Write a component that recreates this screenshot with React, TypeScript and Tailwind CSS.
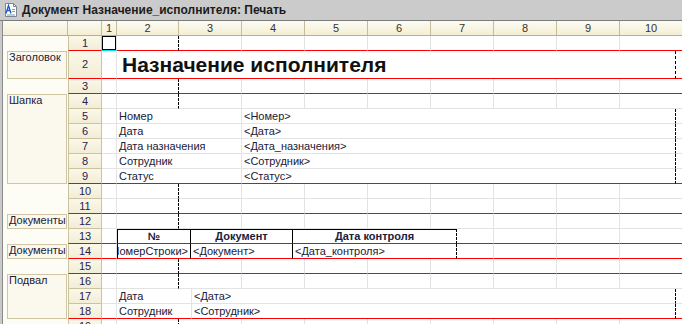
type Cell = {
  w: number;
  text?: string;
  dash?: boolean;
  bold?: boolean;
  align?: "l" | "c" | "r";
  tbl?: boolean;
  tblLeft?: boolean;
  sel?: boolean;
  filler?: boolean;
  title?: boolean;
};

type RowDef = { n: number; h: number; red?: boolean; cells: Cell[] };

const std = (): Cell[] => [
  { w: 15 },
  { w: 62, dash: true },
  { w: 63 }, { w: 63 }, { w: 63 }, { w: 63 }, { w: 63 }, { w: 63 }, { w: 63 }, { w: 63 },
];

const field = (label: string, value: string): Cell[] => [
  { w: 15 },
  { w: 125, text: label },
  { w: 434, text: value, dash: true },
  { w: 20, filler: true },
];

const footer = (label: string, value: string): Cell[] => [
  { w: 15 },
  { w: 75, text: label },
  { w: 484, text: value, dash: true },
  { w: 20, filler: true },
];

const rows: RowDef[] = [
  { n: 1, h: 15, red: true, cells: [{ w: 15, sel: true }, ...std().slice(1)] },
  { n: 2, h: 28, red: true, cells: [{ w: 15 }, { w: 559, text: "Назначение исполнителя", dash: true, title: true }, { w: 20, filler: true }] },
  { n: 3, h: 15, red: true, cells: std() },
  { n: 4, h: 15, cells: std() },
  { n: 5, h: 15, cells: field("Номер", "<Номер>") },
  { n: 6, h: 15, cells: field("Дата", "<Дата>") },
  { n: 7, h: 15, cells: field("Дата назначения", "<Дата_назначения>") },
  { n: 8, h: 15, cells: field("Сотрудник", "<Сотрудник>") },
  { n: 9, h: 15, red: true, cells: field("Статус", "<Статус>") },
  { n: 10, h: 15, cells: std() },
  { n: 11, h: 15, red: true, cells: std() },
  { n: 12, h: 15, cells: std() },
  {
    n: 13, h: 15, red: true, cells: [
      { w: 15 },
      { w: 74, text: "№", bold: true, align: "c", tbl: true, tblLeft: true },
      { w: 102, text: "Документ", bold: true, align: "c", tbl: true },
      { w: 164, text: "Дата контроля", bold: true, align: "c", tbl: true, dash: true },
      { w: 37 }, { w: 63 }, { w: 63 }, { w: 63 },
    ],
  },
  {
    n: 14, h: 15, red: true, cells: [
      { w: 15 },
      { w: 74, text: "<НомерСтроки>", align: "r", tblLeft: true, tbl: true },
      { w: 102, text: "<Документ>", tbl: true },
      { w: 164, text: "<Дата_контроля>", tbl: true, dash: true },
      { w: 37 }, { w: 63 }, { w: 63 }, { w: 63 },
    ],
  },
  { n: 15, h: 15, red: true, cells: std() },
  { n: 16, h: 15, cells: std() },
  { n: 17, h: 15, cells: footer("Дата", "<Дата>") },
  { n: 18, h: 15, red: true, cells: footer("Сотрудник", "<Сотрудник>") },
  { n: 19, h: 15, cells: std() },
];

const groups: { h: number; label?: string }[] = [
  { h: 15 },
  { h: 28, label: "Заголовок" },
  { h: 15 },
  { h: 90, label: "Шапка" },
  { h: 30 },
  { h: 15, label: "Документы" },
  { h: 15 },
  { h: 15, label: "Документы" },
  { h: 15 },
  { h: 45, label: "Подвал" },
  { h: 30 },
];

function DocIcon() {
  return (
    <svg width="16" height="16" viewBox="0 0 16 16" className="shrink-0">
      <path d="M2.5 1.5h8l3 3v10h-11z" fill="#fff" stroke="#7a8694" />
      <path d="M10.5 1.5v3h3" fill="none" stroke="#7a8694" />
      <path d="M3 11.5 5.5 3.5 8 11.5M4 8.5h3" fill="none" stroke="#1f5fb8" strokeWidth="1.4" />
      <path d="M9 7.5h3M9 9.5h3M4 13h8" stroke="#8a96a4" />
    </svg>
  );
}

function GridCell({ c, red }: { c: Cell; red?: boolean }) {
  const bottom = c.sel ? "border-b-[#00e4e4]" : red ? "border-b-[#ff0000]" : "border-b-[#e3e3e3]";
  if (c.filler) {
    return <div className={`h-full shrink-0 border-b ${bottom}`} style={{ width: c.w }} />;
  }
  const right = c.dash || c.tbl ? "border-r border-r-black" : "border-r border-r-[#e3e3e3]";
  const align = c.align === "c" ? "justify-center" : c.align === "r" ? "justify-end pr-[2px]" : "justify-start";
  return (
    <div
      className={`relative flex h-full shrink-0 items-start overflow-hidden whitespace-nowrap border-b ${bottom} ${right} ${c.tblLeft ? "border-l border-l-black" : ""} ${c.tbl && c.bold ? "border-t border-t-black" : ""} ${align} ${c.title ? "pl-[5px]" : c.align ? "" : "pl-[2px]"}`}
      style={{ width: c.w, borderRightStyle: c.dash ? "dashed" : "solid" }}
    >
      {c.sel && <div className="absolute inset-0 border-[1.5px] border-black" />}
      {c.text && (
        <span
          className={
            c.title
              ? "text-[21px] font-bold leading-[27px] text-[#111]"
              : `text-[11px] text-[#20203a] ${c.bold ? "font-bold" : ""} ${c.tbl && c.bold ? "leading-[13px]" : "leading-[14px]"}`
          }
        >
          {c.text}
        </span>
      )}
    </div>
  );
}

function SheetRow({ r }: { r: RowDef }) {
  return (
    <div className="flex shrink-0" style={{ height: r.h }}>
      <div
        className={`flex w-[34px] shrink-0 items-start justify-center border-x border-x-[#cbc3a0] border-b bg-gradient-to-b from-[#fbf8ea] to-[#f2edd5] text-[11px] leading-[14px] text-[#2a2050] ${r.red ? "border-b-[#ff0000]" : "border-b-[#cbc3a0]"}`}
        style={{ paddingTop: r.h > 15 ? 6 : 0 }}
      >
        {r.n}
      </div>
      {r.cells.map((c, i) => (
        <GridCell key={i} c={c} red={r.red} />
      ))}
    </div>
  );
}

const colHeads = [
  { w: 15, t: "1" },
  { w: 62, t: "2" },
  { w: 63, t: "3" },
  { w: 63, t: "4" },
  { w: 63, t: "5" },
  { w: 63, t: "6" },
  { w: 63, t: "7" },
  { w: 63, t: "8" },
  { w: 63, t: "9" },
  { w: 63, t: "10" },
];

export default function App() {
  return (
    <div
      className="flex h-[324px] w-[682px] flex-col overflow-hidden bg-white"
      style={{ fontFamily: '"Liberation Sans", Arial, sans-serif' }}
    >
      {/* title bar */}
      <div className="flex h-[21px] shrink-0 items-center gap-[3px] border-b border-b-[#7c7c7c] bg-[#cbcbcb] pl-[3px]">
        <DocIcon />
        <span className="text-[12px] font-bold text-[#1c1c1c]">Документ Назначение_исполнителя: Печать</span>
      </div>

      <div className="flex min-h-0 flex-1">
        {/* window left edge */}
        <div className="w-[3px] shrink-0 border-r border-r-[#8a8a8a] bg-[#c9c9c9]" />

        <div className="flex min-w-0 flex-1 flex-col">
          {/* column header */}
          <div className="flex h-[15px] shrink-0 border-b border-b-[#b9b08a] bg-gradient-to-b from-[#fdfcf2] to-[#f3eed4] text-[11px] leading-[14px] text-[#333]">
            <div className="w-[65px] shrink-0 border-r border-r-[#c6bd98]" />
            <div className="w-[34px] shrink-0 border-r border-r-[#c6bd98]" />
            {colHeads.map((h) => (
              <div
                key={h.t}
                className="flex shrink-0 justify-center border-r border-r-[#c6bd98]"
                style={{ width: h.w }}
              >
                {h.t}
              </div>
            ))}
          </div>

          <div className="flex min-h-0 flex-1">
            {/* groups column */}
            <div className="flex w-[65px] shrink-0 flex-col bg-[#fdfcf5]">
              {groups.map((g, i) =>
                g.label ? (
                  <div
                    key={i}
                    className="ml-[4px] w-[60px] shrink-0 overflow-hidden whitespace-nowrap border border-[#cfc7a4] bg-[#fbf9ee] pl-[1px] text-[11px] leading-[11px] text-[#20203a]"
                    style={{ height: g.h }}
                  >
                    {g.label}
                  </div>
                ) : (
                  <div key={i} className="shrink-0" style={{ height: g.h }} />
                )
              )}
            </div>

            {/* sheet */}
            <div className="flex min-w-0 flex-1 flex-col overflow-hidden">
              {rows.map((r) => (
                <SheetRow key={r.n} r={r} />
              ))}
            </div>
          </div>
        </div>
      </div>
    </div>
  );
}
